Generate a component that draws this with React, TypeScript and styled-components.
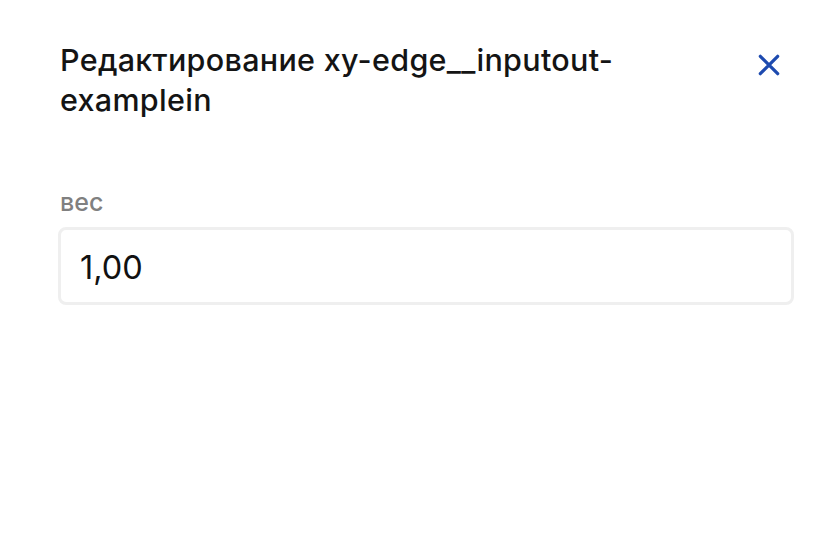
import styled, { createGlobalStyle } from 'styled-components';

const GlobalStyle = createGlobalStyle`
    html, body {
        margin: 0;
        padding: 0;
        background: #ffffff;
    }
    body {
        font-family: Inter, "Noto Sans", "Liberation Sans", sans-serif;
        -webkit-font-smoothing: antialiased;
    }
`;

const Panel = styled.div`
    width: 836px;
    height: 552px;
    box-sizing: border-box;
    padding: 40px 42px 0 58px;
    background: #ffffff;
`;
const Header = styled.div`
    display: flex;
    justify-content: space-between;
    align-items: flex-start;
    gap: 24px;
`;
const Title = styled.h2`
    margin: 0 0 0 2px;
    max-width: 640px;
    font-size: 30.5px;
    font-weight: 500;
    line-height: 40px;
    letter-spacing: 0.3px;
    color: #141414;
`;
const CloseButton = styled.button`
    display: flex;
    align-items: center;
    justify-content: center;
    width: 36px;
    height: 36px;
    margin: 7px 7px 0 0;
    padding: 0;
    border: none;
    background: none;
    color: #1d4aaf;
    cursor: pointer;
`;
const Field = styled.label`
    display: flex;
    flex-direction: column;
    gap: 11px;
    margin-top: 68px;
`;
const FieldLabel = styled.span`
    margin-left: 2px;
    font-size: 25px;
    font-weight: 500;
    line-height: 28px;
    color: #808080;
`;
const Input = styled.input`
    box-sizing: border-box;
    width: 100%;
    height: 78px;
    padding: 2px 19px 0;
    border: 3px solid #efefef;
    border-radius: 8px;
    font-family: inherit;
    font-size: 32.5px;
    font-weight: 400;
    color: #111111;
    background: #ffffff;
    outline: none;
`;

function App() {
    return (
        <>
            <GlobalStyle />
            <Panel>
                <Header>
                    <Title>Редактирование xy-edge__inputout-examplein</Title>
                    <CloseButton aria-label="Закрыть">
                        <svg width="26" height="26" viewBox="0 0 24 24" fill="none">
                            <path d="M4 4 L20 20 M20 4 L4 20" stroke="currentColor" strokeWidth="3" strokeLinecap="round" />
                        </svg>
                    </CloseButton>
                </Header>
                <Field>
                    <FieldLabel>вес</FieldLabel>
                    <Input defaultValue="1,00" />
                </Field>
            </Panel>
        </>
    );
}

export default App;
